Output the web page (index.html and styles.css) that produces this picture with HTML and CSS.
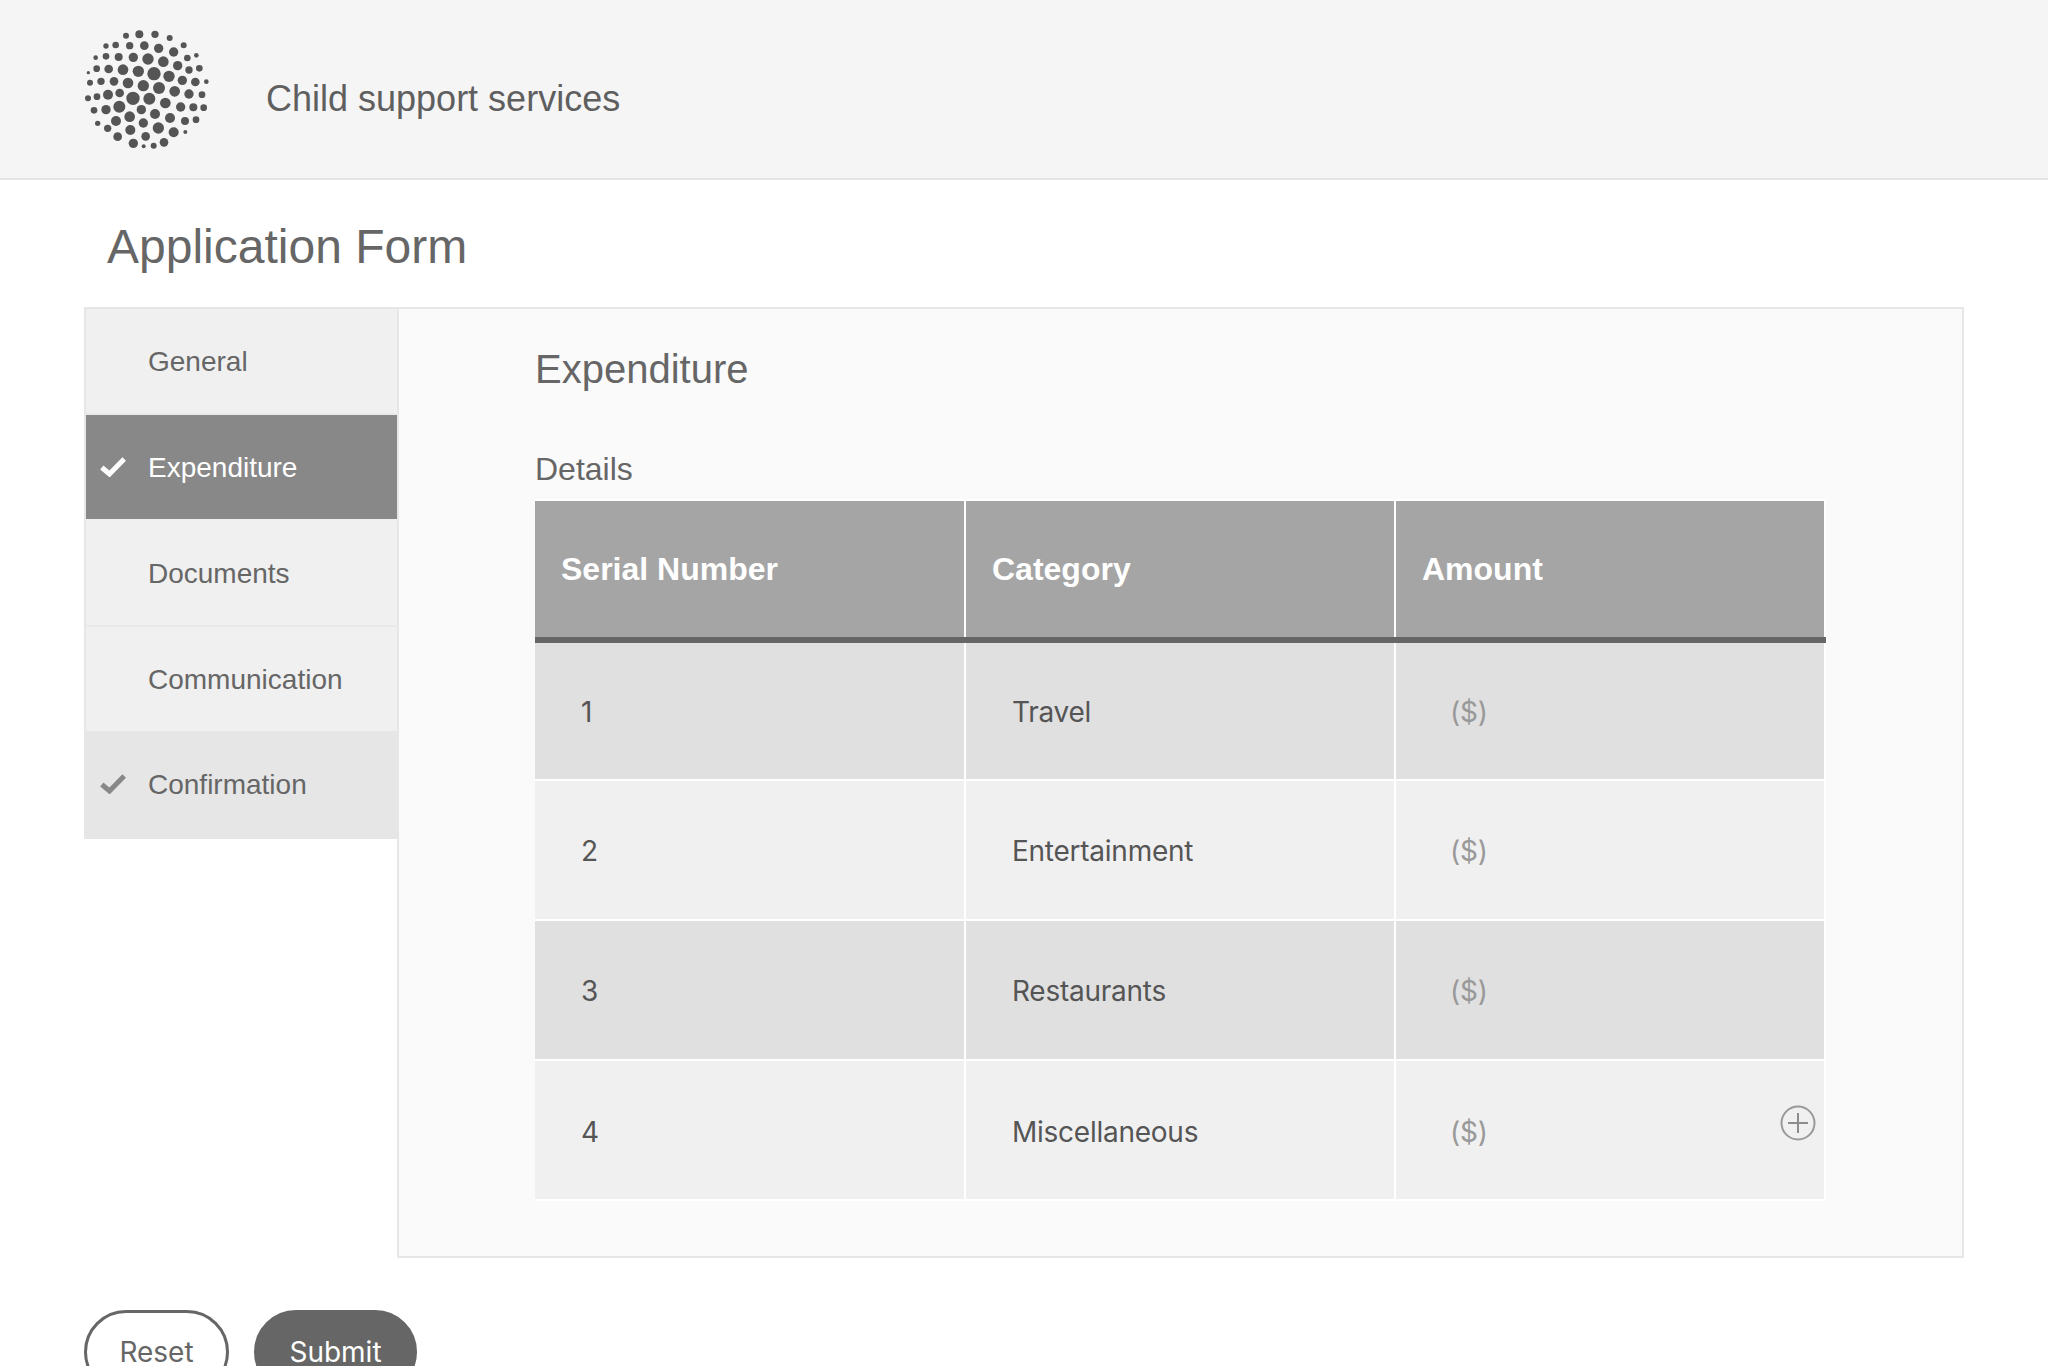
FILE: index.html
```html
<!DOCTYPE html>
<html lang="en">
<head>
<meta charset="utf-8">
<title>Child support services</title>
<link rel="stylesheet" href="styles.css">
</head>
<body>
<header class="topbar">
  <svg class="logo" viewBox="0 0 540 480" aria-hidden="true">
    <g fill="#555">
      <circle cx="198" cy="77" r="9"/><circle cx="238" cy="73" r="12"/><circle cx="285" cy="73" r="11"/><circle cx="329" cy="84" r="9"/>
      <circle cx="138" cy="108" r="8"/><circle cx="167" cy="105" r="10"/><circle cx="209" cy="107" r="11"/><circle cx="253" cy="107" r="13"/><circle cx="296" cy="115" r="14"/><circle cx="341" cy="126" r="14"/><circle cx="371" cy="106" r="9"/>
      <circle cx="107" cy="143" r="7"/><circle cx="138" cy="139" r="10"/><circle cx="176" cy="141" r="12"/><circle cx="220" cy="142" r="14"/><circle cx="264" cy="147" r="17"/><circle cx="310" cy="155" r="16"/><circle cx="353" cy="167" r="14"/><circle cx="382" cy="144" r="10"/><circle cx="409" cy="136" r="7"/>
      <circle cx="85" cy="188" r="5"/><circle cx="110" cy="176" r="10"/><circle cx="146" cy="177" r="13"/><circle cx="189" cy="179" r="16"/><circle cx="235" cy="184" r="17"/><circle cx="282" cy="191" r="20"/><circle cx="327" cy="199" r="17"/><circle cx="387" cy="180" r="11"/><circle cx="418" cy="175" r="10"/>
      <circle cx="90" cy="218" r="9"/><circle cx="123" cy="214" r="11"/><circle cx="162" cy="214" r="13"/><circle cx="204" cy="219" r="16"/><circle cx="250" cy="227" r="17"/><circle cx="297" cy="234" r="18"/><circle cx="367" cy="211" r="14"/><circle cx="406" cy="216" r="13"/><circle cx="439" cy="215" r="7"/><circle cx="344" cy="244" r="16"/>
      <circle cx="84" cy="265" r="9"/><circle cx="111" cy="260" r="10"/><circle cx="144" cy="254" r="15"/><circle cx="179" cy="249" r="13"/><circle cx="219" cy="265" r="20"/><circle cx="268" cy="266" r="18"/><circle cx="316" cy="279" r="16"/><circle cx="387" cy="252" r="14"/><circle cx="426" cy="254" r="10"/>
      <circle cx="102" cy="301" r="10"/><circle cx="138" cy="299" r="14"/><circle cx="178" cy="290" r="18"/><circle cx="244" cy="299" r="14"/><circle cx="362" cy="291" r="14"/><circle cx="400" cy="292" r="12"/><circle cx="431" cy="293" r="10"/>
      <circle cx="113" cy="340" r="8"/><circle cx="168" cy="333" r="15"/><circle cx="209" cy="320" r="16"/><circle cx="285" cy="312" r="15"/><circle cx="330" cy="324" r="15"/><circle cx="375" cy="333" r="12"/><circle cx="408" cy="329" r="10"/>
      <circle cx="143" cy="355" r="11"/><circle cx="211" cy="360" r="15"/><circle cx="250" cy="339" r="14"/><circle cx="295" cy="354" r="17"/><circle cx="341" cy="367" r="15"/><circle cx="376" cy="366" r="6"/>
      <circle cx="173" cy="380" r="13"/><circle cx="257" cy="379" r="13"/><circle cx="220" cy="400" r="14"/><circle cx="251" cy="409" r="6"/><circle cx="281" cy="407" r="9"/><circle cx="312" cy="397" r="13"/>
    </g>
  </svg>
  <span class="brand">Child support services</span>
</header>
<main class="page">
  <h1 class="page-title">Application Form</h1>
  <div class="form-shell">
    <nav class="steps">
      <a class="step">General</a>
      <a class="step step-active">
        <svg class="check" viewBox="0 0 26 20" aria-hidden="true"><path d="M1.8 10.5l7.7 6.5L24.2 2" fill="none" stroke="currentColor" stroke-width="5"/></svg>
        Expenditure</a>
      <a class="step">Documents</a>
      <a class="step step-last-open">Communication</a>
      <a class="step step-done">
        <svg class="check" viewBox="0 0 26 20" aria-hidden="true"><path d="M1.8 10.5l7.7 6.5L24.2 2" fill="none" stroke="currentColor" stroke-width="5"/></svg>
        Confirmation</a>
    </nav>
    <section class="panel">
      <h2 class="panel-title">Expenditure</h2>
      <h3 class="table-title">Details</h3>
      <table class="details">
        <thead>
          <tr><th>Serial Number</th><th>Category</th><th>Amount</th></tr>
        </thead>
        <tbody>
          <tr><td>1</td><td>Travel</td><td class="amount">($)</td></tr>
          <tr><td>2</td><td>Entertainment</td><td class="amount">($)</td></tr>
          <tr><td>3</td><td>Restaurants</td><td class="amount">($)</td></tr>
          <tr><td>4</td><td>Miscellaneous</td><td class="amount">($)
            <svg class="add" viewBox="0 0 36 36" aria-hidden="true"><circle cx="18" cy="18" r="16.5" fill="none" stroke="#999" stroke-width="2"/><path d="M8 18h20M18 8v20" stroke="#8c8c8c" stroke-width="2"/></svg>
          </td></tr>
        </tbody>
      </table>
    </section>
  </div>
  <div class="actions">
    <button class="btn btn-outline" type="button">Reset</button>
    <button class="btn btn-solid" type="button">Submit</button>
  </div>
</main>
</body>
</html>
```
FILE: styles.css
```css
* { box-sizing: border-box; }
html, body { margin: 0; height: 100%; overflow: hidden; background: #fff; }
body { font-family: "Liberation Sans", Arial, sans-serif; color: #666; }

.topbar {
  display: flex; align-items: center; height: 180px; padding-left: 60px;
  background: #f5f5f5; border-bottom: 2px solid #e5e5e5;
}
.logo { width: 180px; height: 160px; flex: none; margin-top: 2px; }
.brand { margin-left: 26px; padding-top: 19px; font-size: 36px; color: #5f5f5f; }

.page { padding: 0 84px; }
.page-title { margin: 0; padding: 34px 0 0 23px; height: 127px; font-size: 48px; font-weight: 400; line-height: 66px; color: #666; }

.form-shell { display: flex; align-items: flex-start; }
.steps {
  width: 313px; flex: none; display: flex; flex-direction: column;
  border: 2px solid #e6e6e6; border-right: 0; background: #e6e6e6;
}
.step {
  position: relative; display: flex; align-items: center; height: 106px; padding: 2px 0 0 62px;
  font-size: 28px; color: #666; background: #f0f0f0; border-bottom: 2px solid #e9e9e9;
}
.step-active { background: #888; color: #fff; border-bottom-color: #eee; }
.step-last-open { height: 104px; border-bottom: 0; }
.step-done { background: #e6e6e6; border-bottom: 0; }
.check { position: absolute; left: 14px; top: 50%; width: 26px; height: 20px; margin-top: -10px; }
.step-done .check { color: #888; }

.panel {
  width: 1567px; height: 951px; padding: 32px 0 0 136px;
  background: #fafafa; border: 2px solid #e6e6e6;
}
.panel-title { margin: 0; height: 62px; font-size: 40px; font-weight: 400; line-height: 57px; color: #666; }
.table-title { margin: 0; padding-top: 46px; height: 96px; font-size: 32px; font-weight: 400; line-height: 40px; color: #666; }

.details { width: 1291px; border-collapse: collapse; table-layout: fixed; }
.details th, .details td { border: 2px solid #fff; text-align: left; }
.details th:first-child, .details td:first-child { border-left: 0; }
.details th {
  height: 140px; padding: 0 0 0 26px; background: #a5a5a5; color: #fff;
  font-size: 32px; font-weight: 700; border-bottom: 6px solid #666;
}
.details td { height: 140px; padding: 2px 0 0 46px; font-family: Inter, "Liberation Sans", sans-serif; font-size: 28px; letter-spacing: -0.25px; color: #555; }
.details tbody tr:nth-child(odd) td { background: #e0e0e0; }
.details tbody tr:nth-child(even) td { background: #f0f0f0; }
.details tbody tr:last-child td { padding-top: 4px; }
.details td.amount { position: relative; padding-left: 54px; color: #999; }
.add { position: absolute; right: 8px; top: 44px; width: 36px; height: 36px; }

.actions { display: flex; gap: 25px; margin-top: 52px; }
.btn { height: 84px; border-radius: 42px; font-family: Inter, "Liberation Sans", sans-serif; font-size: 28px; }
.btn-outline { width: 145px; background: #fff; color: #666; border: 3px solid #666; }
.btn-solid { width: 163px; background: #666; color: #fff; border: 3px solid #666; }
```
